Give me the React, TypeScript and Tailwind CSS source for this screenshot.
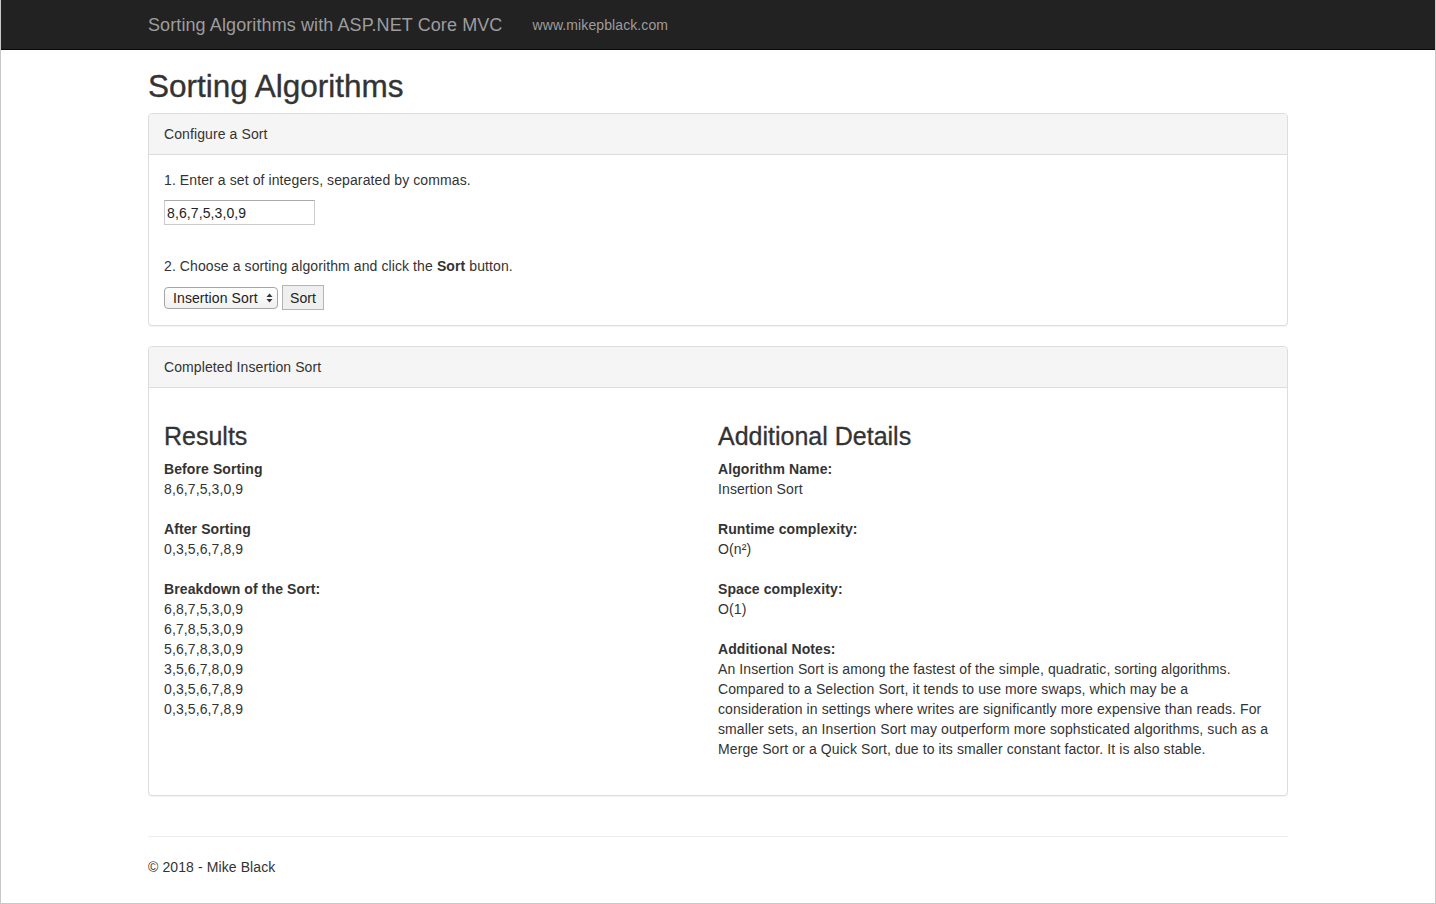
import React from 'react';

const steps = [
  '6,8,7,5,3,0,9',
  '6,7,8,5,3,0,9',
  '5,6,7,8,3,0,9',
  '3,5,6,7,8,0,9',
  '0,3,5,6,7,8,9',
  '0,3,5,6,7,8,9',
];

const Panel: React.FC<{ title: string; bodyClass?: string; children: React.ReactNode }> = ({ title, bodyClass, children }) => (
  <div className="mb-5 rounded border border-[#ddd] bg-white shadow-[0_1px_1px_rgba(0,0,0,0.05)]">
    <div className="rounded-t border-b border-[#ddd] bg-[#f5f5f5] px-[15px] py-[10px] text-[#333]">{title}</div>
    <div className={`p-[15px] ${bodyClass ?? ''}`}>{children}</div>
  </div>
);

const App: React.FC = () => {
  return (
    <div className="h-screen overflow-hidden border border-t-0 border-[#c8c8c8] bg-white font-['Liberation_Sans',Arial,sans-serif] text-[14px] leading-[20px] tracking-[0.1px] text-[#333]">
      {/* Navbar */}
      <nav className="h-[50px] border-b border-[#080808] bg-[#222]">
        <div className="mx-auto flex h-full w-[1170px] items-center px-[15px]">
          <a className="text-[18px] leading-[20px] text-[#9d9d9d]">Sorting Algorithms with ASP.NET Core MVC</a>
          <a className="ml-[30px] text-[#9d9d9d]">www.mikepblack.com</a>
        </div>
      </nav>

      <div className="mx-auto w-[1170px] px-[15px]">
        <h2 className="mt-5 mb-[10px] text-[31.5px] leading-[33px] tracking-normal text-[#333] [-webkit-text-stroke:0.35px_#333]">
          Sorting Algorithms
        </h2>

        <Panel title="Configure a Sort">
          <p className="mb-[10px]">1. Enter a set of integers, separated by commas.</p>
          <input
            type="text"
            defaultValue="8,6,7,5,3,0,9"
            className="h-[25px] w-[151px] border border-[#ccc] border-t-[#aaa] px-[2px] text-[14px] text-[#222] outline-none"
          />
          <p className="mt-[31px] mb-[9px]">
            2. Choose a sorting algorithm and click the <b>Sort</b> button.
          </p>
          <div className="flex items-center gap-[4px]">
            <div className="relative">
              <select className="h-[22px] w-[114px] appearance-none rounded-[4px] border border-[#a6a6a6] bg-gradient-to-b from-white to-[#f0f0f0] pl-[8px] text-[14px] leading-[20px] text-[#222] outline-none">
                <option>Insertion Sort</option>
                <option>Selection Sort</option>
                <option>Bubble Sort</option>
                <option>Merge Sort</option>
                <option>Quick Sort</option>
              </select>
              <svg className="pointer-events-none absolute top-[6px] right-[5px]" width="7" height="10" viewBox="0 0 7 10">
                <path d="M0.5 4 L3.5 0.5 L6.5 4 Z" fill="#333" />
                <path d="M0.5 6 L3.5 9.5 L6.5 6 Z" fill="#333" />
              </svg>
            </div>
            <button className="h-[25px] w-[42px] border border-[#b4b4b4] bg-[#efefef] text-[14px] text-[#222]">Sort</button>
          </div>
        </Panel>

        <Panel title="Completed Insertion Sort" bodyClass="pb-[36px]">
          <div className="grid grid-cols-2">
            <div>
              <h3 className="mt-5 mb-[10px] text-[25px] leading-[26px] tracking-normal [-webkit-text-stroke:0.3px_#333]">Results</h3>
              <b>Before Sorting</b>
              <div>8,6,7,5,3,0,9</div>
              <div className="h-5" />
              <b>After Sorting</b>
              <div>0,3,5,6,7,8,9</div>
              <div className="h-5" />
              <b>Breakdown of the Sort:</b>
              {steps.map((s, i) => (
                <div key={i}>{s}</div>
              ))}
            </div>
            <div>
              <h3 className="mt-5 mb-[10px] text-[25px] leading-[26px] tracking-normal [-webkit-text-stroke:0.3px_#333]">
                Additional Details
              </h3>
              <b>Algorithm Name:</b>
              <div>Insertion Sort</div>
              <div className="h-5" />
              <b>Runtime complexity:</b>
              <div>O(n²)</div>
              <div className="h-5" />
              <b>Space complexity:</b>
              <div>O(1)</div>
              <div className="h-5" />
              <b>Additional Notes:</b>
              <div>
                An Insertion Sort is among the fastest of the simple, quadratic, sorting algorithms. Compared to a Selection
                Sort, it tends to use more swaps, which may be a consideration in settings where writes are significantly
                more expensive than reads. For smaller sets, an Insertion Sort may outperform more sophsticated algorithms,
                such as a Merge Sort or a Quick Sort, due to its smaller constant factor. It is also stable.
              </div>
            </div>
          </div>
        </Panel>

        <footer className="pt-5">
          <hr className="mb-5 border-t border-[#eee]" />
          <p>© 2018 - Mike Black</p>
        </footer>
      </div>
    </div>
  );
};

export default App;
